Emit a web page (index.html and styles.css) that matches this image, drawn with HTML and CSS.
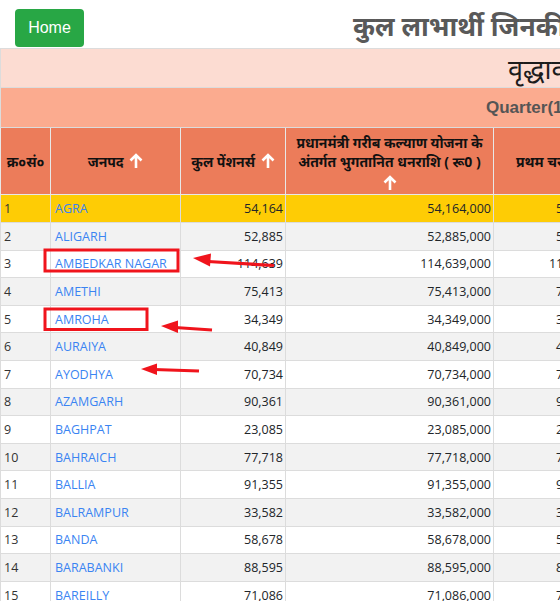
FILE: index.html
```html
<!DOCTYPE html>
<html lang="hi">
<head>
<meta charset="utf-8">
<title>Report</title>
<link rel="stylesheet" href="styles.css">
</head>
<body>
<div class="page">
  <div class="topbar">
    <a class="btn-home" href="#">Home</a>
    <h1 class="title">कुल लाभार्थी जिनकी पेंशन का भुगतान किया गया</h1>
  </div>
  <table class="grid">
    <colgroup>
      <col class="c1"><col class="c2"><col class="c3"><col class="c4"><col class="c5"><col class="c6"><col class="c7">
    </colgroup>
    <thead>
      <tr class="band1"><th colspan="7"><span class="band1-text">वृद्धावस्था पेंशन योजना</span></th></tr>
      <tr class="band2"><th colspan="7"><span class="band2-text">Quarter(1) 2020-2021</span></th></tr>
      <tr class="head">
        <th>क्र०सं०</th>
        <th>जनपद <svg class="up" viewBox="0 0 14 16" width="14" height="16"><path d="M7 15V2M1.5 7.5L7 2l5.5 5.5" fill="none" stroke="#fff" stroke-width="2.6"/></svg></th>
        <th>कुल पेंशनर्स <svg class="up" viewBox="0 0 14 16" width="14" height="16"><path d="M7 15V2M1.5 7.5L7 2l5.5 5.5" fill="none" stroke="#fff" stroke-width="2.6"/></svg></th>
        <th class="wrap">प्रधानमंत्री गरीब कल्याण योजना के अंतर्गत भुगतानित धनराशि ( रू0 )<br><svg class="up" viewBox="0 0 14 16" width="14" height="16"><path d="M7 15V2M1.5 7.5L7 2l5.5 5.5" fill="none" stroke="#fff" stroke-width="2.6"/></svg></th>
        <th class="left">प्रथम चरण में भुगतानित</th>
        <th>द्वितीय चरण</th>
        <th>तृतीय चरण</th>
      </tr>
    </thead>
    <tbody>
      <tr class="hl"><td class="sn">1</td><td><a href="#">AGRA</a></td><td class="num">54,164</td><td class="num">54,164,000</td><td class="num">54,164</td><td class="num">54,164</td><td class="num">54,164</td></tr>
      <tr><td class="sn">2</td><td><a href="#">ALIGARH</a></td><td class="num">52,885</td><td class="num">52,885,000</td><td class="num">52,885</td><td class="num">52,885</td><td class="num">52,885</td></tr>
      <tr><td class="sn">3</td><td><a href="#">AMBEDKAR NAGAR</a></td><td class="num">114,639</td><td class="num">114,639,000</td><td class="num">114,639</td><td class="num">114,639</td><td class="num">114,639</td></tr>
      <tr><td class="sn">4</td><td><a href="#">AMETHI</a></td><td class="num">75,413</td><td class="num">75,413,000</td><td class="num">75,413</td><td class="num">75,413</td><td class="num">75,413</td></tr>
      <tr><td class="sn">5</td><td><a href="#">AMROHA</a></td><td class="num">34,349</td><td class="num">34,349,000</td><td class="num">34,349</td><td class="num">34,349</td><td class="num">34,349</td></tr>
      <tr><td class="sn">6</td><td><a href="#">AURAIYA</a></td><td class="num">40,849</td><td class="num">40,849,000</td><td class="num">40,849</td><td class="num">40,849</td><td class="num">40,849</td></tr>
      <tr><td class="sn">7</td><td><a href="#">AYODHYA</a></td><td class="num">70,734</td><td class="num">70,734,000</td><td class="num">70,734</td><td class="num">70,734</td><td class="num">70,734</td></tr>
      <tr><td class="sn">8</td><td><a href="#">AZAMGARH</a></td><td class="num">90,361</td><td class="num">90,361,000</td><td class="num">90,361</td><td class="num">90,361</td><td class="num">90,361</td></tr>
      <tr><td class="sn">9</td><td><a href="#">BAGHPAT</a></td><td class="num">23,085</td><td class="num">23,085,000</td><td class="num">23,085</td><td class="num">23,085</td><td class="num">23,085</td></tr>
      <tr><td class="sn">10</td><td><a href="#">BAHRAICH</a></td><td class="num">77,718</td><td class="num">77,718,000</td><td class="num">77,718</td><td class="num">77,718</td><td class="num">77,718</td></tr>
      <tr><td class="sn">11</td><td><a href="#">BALLIA</a></td><td class="num">91,355</td><td class="num">91,355,000</td><td class="num">91,355</td><td class="num">91,355</td><td class="num">91,355</td></tr>
      <tr><td class="sn">12</td><td><a href="#">BALRAMPUR</a></td><td class="num">33,582</td><td class="num">33,582,000</td><td class="num">33,582</td><td class="num">33,582</td><td class="num">33,582</td></tr>
      <tr><td class="sn">13</td><td><a href="#">BANDA</a></td><td class="num">58,678</td><td class="num">58,678,000</td><td class="num">58,678</td><td class="num">58,678</td><td class="num">58,678</td></tr>
      <tr><td class="sn">14</td><td><a href="#">BARABANKI</a></td><td class="num">88,595</td><td class="num">88,595,000</td><td class="num">88,595</td><td class="num">88,595</td><td class="num">88,595</td></tr>
      <tr><td class="sn">15</td><td><a href="#">BAREILLY</a></td><td class="num">71,086</td><td class="num">71,086,000</td><td class="num">71,086</td><td class="num">71,086</td><td class="num">71,086</td></tr>
      <tr><td class="sn">16</td><td><a href="#">BASTI</a></td><td class="num">60,112</td><td class="num">60,112,000</td><td class="num">60,112</td><td class="num">60,112</td><td class="num">60,112</td></tr>
    </tbody>
  </table>
  <svg class="marks" width="560" height="601" viewBox="0 0 560 601">
    <rect x="45" y="250" width="133" height="21" fill="none" stroke="#f0141c" stroke-width="3"/>
    <rect x="45" y="309" width="102" height="20.5" fill="none" stroke="#f0141c" stroke-width="3"/>
    <path d="M208 261.5L274 265.5" stroke="#f0141c" stroke-width="3.2"/>
    <path d="M193 258L211 253.5L210 266.5Z" fill="#f0141c"/>
    <path d="M175 327.5L212 330" stroke="#f0141c" stroke-width="3.2"/>
    <path d="M161 326L178 320.5L178 333Z" fill="#f0141c"/>
    <path d="M154 369.5L199 371" stroke="#f0141c" stroke-width="3.2"/>
    <path d="M141 369L157 363.5L157 375Z" fill="#f0141c"/>
  </svg>
</div>
</body>
</html>
```

FILE: styles.css
```css
html, body {
  margin: 0;
  padding: 0;
  overflow: hidden;
  background: #fff;
}
body {
  font-family: "Open Sans", "Noto Sans", sans-serif;
  color: #212529;
}
.page {
  position: relative;
  width: 1400px;
}
.topbar {
  height: 48px;
  display: flex;
  align-items: center;
  padding-left: 15px;
}
.btn-home {
  display: flex;
  align-items: center;
  justify-content: center;
  width: 69px;
  height: 38px;
  margin-top: 8px;
  background: #28a745;
  border-radius: 4px;
  color: #fff;
  font-family: "Liberation Sans", Arial, sans-serif;
  font-size: 16px;
  text-decoration: none;
}
.title {
  margin: 4px 0 0 269px;
  font-size: 26.5px;
  font-weight: bold;
  color: #595959;
  white-space: nowrap;
  font-family: "Noto Sans", sans-serif;
}
.grid {
  border-collapse: collapse;
  table-layout: fixed;
  width: 1000px;
}
.c1 { width: 50px; }
.c2 { width: 130px; }
.c3 { width: 105px; }
.c4 { width: 208px; }
.c5 { width: 104px; }
.c6 { width: 200px; }
.c7 { width: 203px; }
.grid th, .grid td {
  border: 1px solid #dcdcdc;
}
.band1 th {
  height: 38px;
  background: #fcdcd2;
  text-align: left;
  padding: 0 0 0 507px;
  font-weight: normal;
  font-size: 27px;
  line-height: 1;
  color: #1c1c1c;
  white-space: nowrap;
  font-family: "Noto Sans", sans-serif;
}
.band2 th {
  height: 38px;
  background: #fbab8f;
  text-align: left;
  padding: 1px 0 0 485px;
  font-weight: bold;
  font-size: 17px;
  color: #555;
  white-space: nowrap;
  font-family: "Liberation Sans", Arial, sans-serif;
}
.head th {
  height: 63px;
  background: #ec7c5a;
  color: #111;
  font-size: 14px;
  font-weight: bold;
  padding: 0 4px;
  line-height: 19px;
  text-align: center;
  vertical-align: middle;
  border-color: #e8e8e8;
  font-family: "Noto Sans", sans-serif;
}
.head th.wrap {
  padding: 3px 8px 0;
}
.head th.left {
  text-align: left;
  padding-left: 22px;
  white-space: nowrap;
  overflow: hidden;
}
.up {
  vertical-align: -2px;
  margin-left: 2px;
}
.wrap .up {
  margin: 4px 0 0;
}
.grid td {
  height: 26.6px;
  padding: 0 4px;
  font-size: 12.5px;
  vertical-align: middle;
  white-space: nowrap;
}
.grid tbody tr:nth-child(even) td {
  background: #f2f2f2;
}
.grid tbody tr.hl td {
  background: #fecc05;
  height: 27px;
}
.sn {
  font-size: 16px;
  color: #333;
  padding-left: 3px !important;
}
.num {
  text-align: right;
  padding-right: 2px !important;
}
.grid a {
  color: #3a84f2;
  text-decoration: none;
}
.marks {
  position: absolute;
  left: 0;
  top: 0;
  pointer-events: none;
}
```
